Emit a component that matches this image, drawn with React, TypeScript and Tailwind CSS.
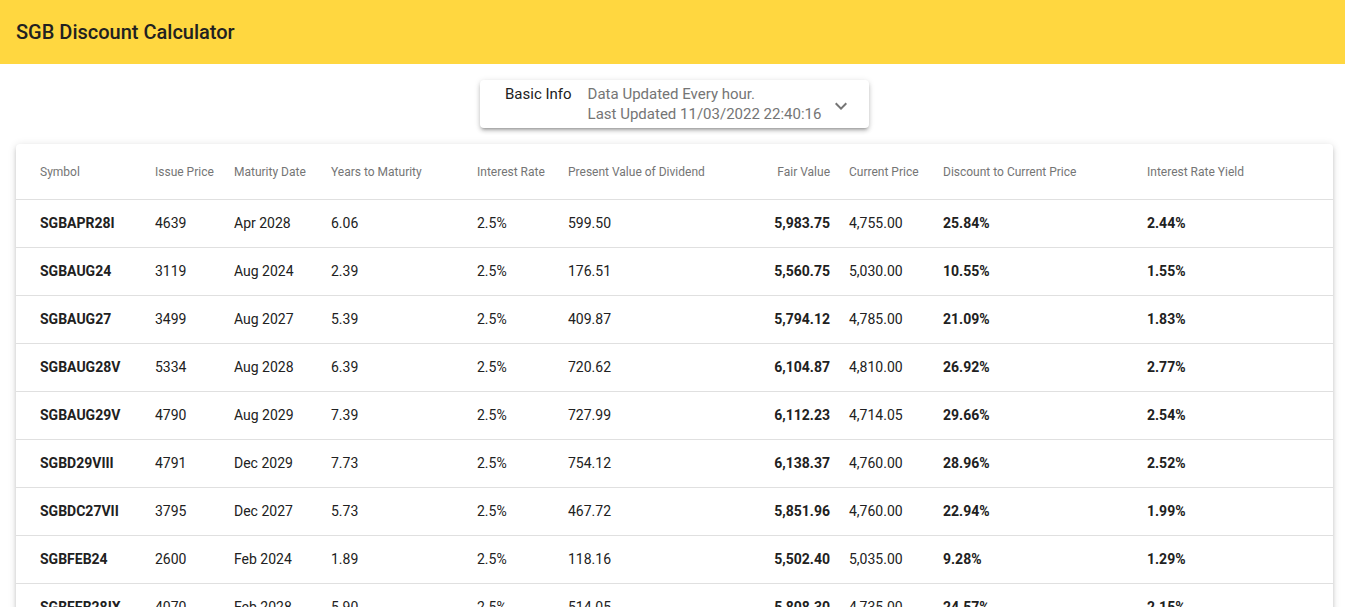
import React from "react";

const bonds = [
  ["SGBAPR28I", "4639", "Apr 2028", "6.06", "2.5%", "599.50", "5,983.75", "4,755.00", "25.84%", "2.44%"],
  ["SGBAUG24", "3119", "Aug 2024", "2.39", "2.5%", "176.51", "5,560.75", "5,030.00", "10.55%", "1.55%"],
  ["SGBAUG27", "3499", "Aug 2027", "5.39", "2.5%", "409.87", "5,794.12", "4,785.00", "21.09%", "1.83%"],
  ["SGBAUG28V", "5334", "Aug 2028", "6.39", "2.5%", "720.62", "6,104.87", "4,810.00", "26.92%", "2.77%"],
  ["SGBAUG29V", "4790", "Aug 2029", "7.39", "2.5%", "727.99", "6,112.23", "4,714.05", "29.66%", "2.54%"],
  ["SGBD29VIII", "4791", "Dec 2029", "7.73", "2.5%", "754.12", "6,138.37", "4,760.00", "28.96%", "2.52%"],
  ["SGBDC27VII", "3795", "Dec 2027", "5.73", "2.5%", "467.72", "5,851.96", "4,760.00", "22.94%", "1.99%"],
  ["SGBFEB24", "2600", "Feb 2024", "1.89", "2.5%", "118.16", "5,502.40", "5,035.00", "9.28%", "1.29%"],
  ["SGBFEB28IX", "4070", "Feb 2028", "5.90", "2.5%", "514.05", "5,808.30", "4,735.00", "24.57%", "2.15%"],
];

const headers = [
  "Symbol",
  "Issue Price",
  "Maturity Date",
  "Years to Maturity",
  "Interest Rate",
  "Present Value of Dividend",
  "Fair Value",
  "Current Price",
  "Discount to Current Price",
  "Interest Rate Yield",
];

const gridCols =
  "grid grid-cols-[123px_79px_97px_146px_91px_208px_74px_93px_204px_202px] items-center";

// padding / alignment per column
const cellCls = [
  "pl-6",
  "pl-4",
  "pl-4",
  "pl-4",
  "pl-4",
  "pl-4",
  "pr-1 text-right",
  "pl-[15px]",
  "pl-4",
  "pl-4",
];

const boldCols = [0, 6, 8, 9];

function ExpandMore() {
  return (
    <svg viewBox="0 0 24 24" className="h-6 w-6 fill-[#757575]">
      <path d="M16.59 8.59 12 13.17 7.41 8.59 6 10l6 6 6-6z" />
    </svg>
  );
}

export default function App() {
  return (
    <div className="h-screen w-screen overflow-hidden bg-white font-['Roboto',sans-serif]">
      <div className="w-[1349px]">
        <header className="flex h-16 items-center bg-[#ffd740] px-4">
          <h1 className="text-[20px] font-medium text-[#212121]">SGB Discount Calculator</h1>
        </header>

        <div className="mx-auto mt-4 flex h-12 w-[389px] items-center rounded bg-white pl-[25px] pr-4 shadow-[0_3px_3px_-2px_rgba(0,0,0,0.25),0_3px_4px_0_rgba(0,0,0,0.16),0_1px_6px_0_rgba(0,0,0,0.12)]">
          <div className="flex items-start text-[15px] leading-5">
            <span className="text-[#212121]">Basic Info</span>
            <div className="ml-4 flex flex-col text-[#757575]">
              <span>Data Updated Every hour.</span>
              <span>Last Updated 11/03/2022 22:40:16</span>
            </div>
          </div>
          <div className="ml-auto mt-1">
            <ExpandMore />
          </div>
        </div>

        <div className="ml-4 mt-4 w-[1317px] rounded bg-white shadow-[0_3px_3px_-2px_rgba(0,0,0,0.2),0_3px_4px_0_rgba(0,0,0,0.14),0_1px_8px_0_rgba(0,0,0,0.12)]">
          <div className={`${gridCols} h-14 border-b border-[#e0e0e0] text-[12px] text-[#757575]`}>
            {headers.map((h, i) => (
              <div key={h} className={cellCls[i]}>
                {h}
              </div>
            ))}
          </div>
          {bonds.map((row) => (
            <div
              key={row[0]}
              className={`${gridCols} h-12 border-b border-[#e0e0e0] text-[14px] text-[#212121]`}
            >
              {row.map((v, i) => (
                <div
                  key={i}
                  className={`${cellCls[i]} ${boldCols.includes(i) ? "font-bold" : ""}`}
                >
                  {v}
                </div>
              ))}
            </div>
          ))}
        </div>
      </div>
    </div>
  );
}
